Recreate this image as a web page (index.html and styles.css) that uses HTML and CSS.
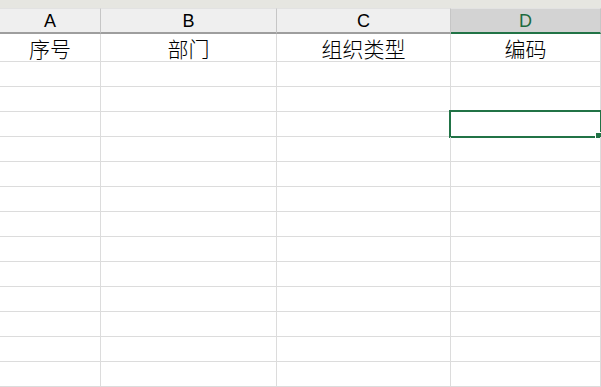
FILE: index.html
```html
<!DOCTYPE html>
<html>
<head>
<meta charset="utf-8">
<link rel="stylesheet" href="styles.css">
</head>
<body>
<div class="topbar"></div>
<div class="sheet">
  <div class="colhead">A</div>
  <div class="colhead">B</div>
  <div class="colhead">C</div>
  <div class="colhead active">D</div>

  <div class="cell title">序号</div>
  <div class="cell title">部门</div>
  <div class="cell title">组织类型</div>
  <div class="cell title">编码</div>

  <div class="cell"></div><div class="cell"></div><div class="cell"></div><div class="cell"></div>
  <div class="cell"></div><div class="cell"></div><div class="cell"></div><div class="cell"></div>
  <div class="cell"></div><div class="cell"></div><div class="cell"></div><div class="cell selected"><span class="sel"><span class="handle"></span></span></div>
  <div class="cell"></div><div class="cell"></div><div class="cell"></div><div class="cell"></div>
  <div class="cell"></div><div class="cell"></div><div class="cell"></div><div class="cell"></div>
  <div class="cell"></div><div class="cell"></div><div class="cell"></div><div class="cell"></div>
  <div class="cell"></div><div class="cell"></div><div class="cell"></div><div class="cell"></div>
  <div class="cell"></div><div class="cell"></div><div class="cell"></div><div class="cell"></div>
  <div class="cell"></div><div class="cell"></div><div class="cell"></div><div class="cell"></div>
  <div class="cell"></div><div class="cell"></div><div class="cell"></div><div class="cell"></div>
  <div class="cell"></div><div class="cell"></div><div class="cell"></div><div class="cell"></div>
  <div class="cell"></div><div class="cell"></div><div class="cell"></div><div class="cell"></div>
  <div class="cell"></div><div class="cell"></div><div class="cell"></div><div class="cell"></div>
</div>
</body>
</html>
```
FILE: styles.css
```css
html, body {
  margin: 0;
  padding: 0;
  background: #ffffff;
  overflow: hidden;
}
.topbar {
  height: 8px;
  background: #e6e6e1;
}
.sheet {
  display: grid;
  grid-template-columns: 101px 176px 174px 1fr;
  grid-auto-rows: 25px;
  grid-template-rows: 26px 28px;
}
.colhead {
  box-sizing: border-box;
  background: #efefef;
  border-right: 1px solid #c6c6c6;
  border-bottom: 2px solid #9e9e9e;
  border-top: 1px solid #e2e2e2;
  font-family: "Liberation Sans", Arial, sans-serif;
  font-size: 18px;
  color: #000;
  display: flex;
  align-items: center;
  justify-content: center;
  padding-top: 1px;
}
.colhead.active {
  background: #d3d3d3;
  color: #1e6b3f;
  border-bottom-color: #217346;
}
.cell {
  box-sizing: border-box;
  border-right: 1px solid #dcdcdc;
  border-bottom: 1px solid #dcdcdc;
  position: relative;
}
.title {
  font-family: "Noto Sans CJK SC", sans-serif;
  font-weight: 300;
  font-size: 21px;
  color: #000;
  display: flex;
  align-items: center;
  justify-content: center;
  line-height: 1;
  padding-top: 1px;
}
.sel {
  position: absolute;
  left: -2px;
  top: -2px;
  right: -2px;
  bottom: -2px;
  border: 2px solid #217346;
  box-sizing: border-box;
}
.handle {
  position: absolute;
  right: -2px;
  bottom: -3px;
  width: 5px;
  height: 5px;
  background: #217346;
  border: 1px solid #fff;
  box-sizing: content-box;
}
```
